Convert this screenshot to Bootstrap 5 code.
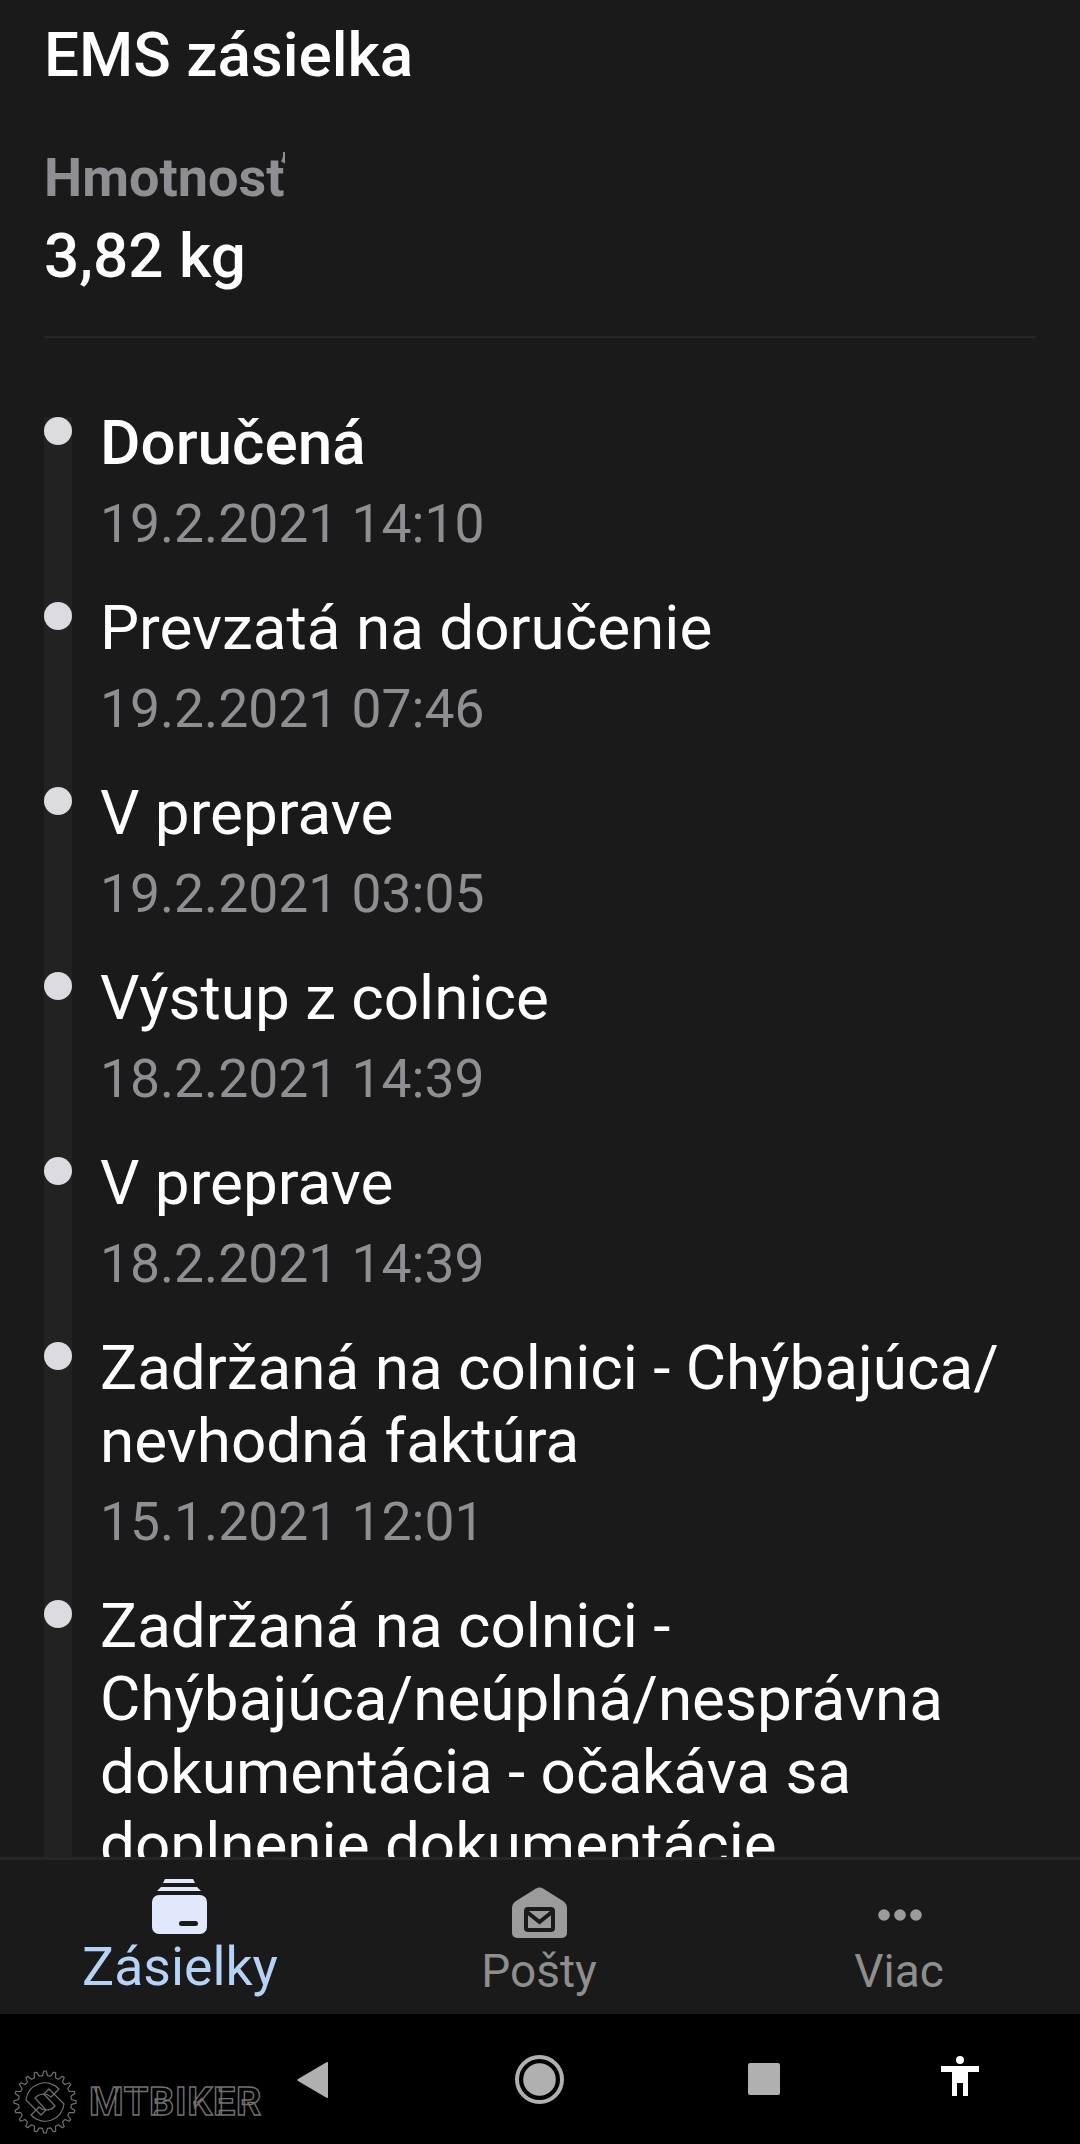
<!doctype html>
<html lang="en">
<head>
  <meta charset="UTF-8">
  <title>EMS zásielka</title>
  <link href="https://cdn.jsdelivr.net/npm/bootstrap@5.3.3/dist/css/bootstrap.min.css" rel="stylesheet">
  <script src="https://cdn.jsdelivr.net/npm/bootstrap@5.3.3/dist/js/bootstrap.bundle.min.js"></script>
  <style>
    html, body { height: 100%; }
    body { background: #1a1a1a; font-family: Roboto, "Liberation Sans", sans-serif; color: #fff; overflow: hidden; }
    .app-shell { width: 1080px; height: 2144px; }
    .status-edge { height: 4px; background: #1c1a16; }
    .scroll-area { min-height: 0; padding: 0 44px; }
    .ship-title { font-size: 62px; font-weight: 500; line-height: 66px; margin: 18px 0 0; }
    .weight-label { font-size: 54px; font-weight: 700; line-height: 60px; color: #8e8e93; margin-top: 60px; width: 241px; overflow: hidden; white-space: nowrap; }
    .weight-value { font-size: 62px; font-weight: 500; line-height: 66px; margin-top: 15px; }
    .sep-line { height: 2px; background: #262626; margin-top: 47px; }
    .track-list { margin-top: 68px; position: relative; }
    .track-rail { position: absolute; left: 0; top: 11px; bottom: 0; width: 28px; background: #222; }
    .track-row { position: relative; padding-left: 56px; padding-bottom: 37px; }
    .track-row:last-child { padding-bottom: 80px; }
    .track-dot { position: absolute; left: 0; top: 11px; width: 28px; height: 28px; border-radius: 50%; background: #dcdce0; }
    .track-name { font-size: 62px; line-height: 73px; }
    .track-name.done { font-weight: 500; }
    .track-when { font-size: 53.4px; line-height: 60px; color: #8e8e93; margin-top: 15px; }
    .tab-bar { height: 157px; flex: none; background: #1a1a1a; border-top: 3px solid #262626; }
    .tab-cell { width: 360px; height: 100%; position: relative; text-align: center; }
    .tab-icon { position: absolute; }
    .tab-text { position: absolute; left: 0; right: 2px; line-height: 54px; color: #8e8e8e; font-size: 46px; }
    .tab-text.active { right: 0; color: #b6d3f7; font-size: 53.6px; }
    .sys-bar { height: 130px; flex: none; background: #000; position: relative; }
    .sys-icon { position: absolute; }
    .wm-text { position: absolute; left: 89px; top: 68px; font-size: 39.5px; line-height: 40px; font-weight: 700; color: #000; -webkit-text-stroke: 1.4px #707070; letter-spacing: .75px; }
  </style>
</head>
<body>
<div class="app-shell d-flex flex-column">
  <div class="status-edge flex-shrink-0"></div>
  <div class="scroll-area flex-grow-1 overflow-hidden">
    <h1 class="ship-title">EMS zásielka</h1>
    <div class="weight-label">Hmotnosť</div>
    <div class="weight-value">3,82 kg</div>
    <div class="sep-line"></div>
    <div class="track-list">
      <div class="track-rail"></div>
      <div class="track-row"><span class="track-dot"></span><div class="track-name done">Doručená</div><div class="track-when">19.2.2021 14:10</div></div>
      <div class="track-row"><span class="track-dot"></span><div class="track-name">Prevzatá na doručenie</div><div class="track-when">19.2.2021 07:46</div></div>
      <div class="track-row"><span class="track-dot"></span><div class="track-name">V preprave</div><div class="track-when">19.2.2021 03:05</div></div>
      <div class="track-row"><span class="track-dot"></span><div class="track-name">Výstup z colnice</div><div class="track-when">18.2.2021 14:39</div></div>
      <div class="track-row"><span class="track-dot"></span><div class="track-name">V preprave</div><div class="track-when">18.2.2021 14:39</div></div>
      <div class="track-row"><span class="track-dot"></span><div class="track-name">Zadržaná na colnici - Chýbajúca/<br>nevhodná faktúra</div><div class="track-when">15.1.2021 12:01</div></div>
      <div class="track-row"><span class="track-dot"></span><div class="track-name">Zadržaná na colnici -<br>Chýbajúca/neúplná/nesprávna<br>dokumentácia - očakáva sa<br>doplnenie dokumentácie</div></div>
    </div>
  </div>
  <div class="tab-bar d-flex">
    <div class="tab-cell">
      <svg class="tab-icon" style="left:152px;top:19px" width="55" height="55" viewBox="0 0 55 55"><path d="M13 0h28l2 4H11z" fill="#e2e8fc"/><path d="M9 8h36l4 4H5z" fill="#e2e8fc"/><path fill-rule="evenodd" d="M7 16h41a7 7 0 0 1 7 7v25a7 7 0 0 1-7 7H7a7 7 0 0 1-7-7V23a7 7 0 0 1 7-7zM29.500 42h14a2.500 2.500 0 0 1 0 5h-14a2.500 2.500 0 0 1 0-5z" fill="#e2e8fc"/></svg>
      <div class="tab-text active" style="top:80px">Zásielky</div>
    </div>
    <div class="tab-cell">
      <svg class="tab-icon" style="left:152px;top:27px" width="55" height="51" viewBox="0 0 55 51"><path d="M24 1.500Q27.500-.5 31 1.500L51 14Q55 17 55 21V46a5 5 0 0 1-5 5H5a5 5 0 0 1-5-5V21Q0 17 4 14Z" fill="#9b9b9b"/><rect x="14" y="22" width="27" height="21" rx="2" fill="none" stroke="#1a1a1a" stroke-width="4"/><path d="M15 25l12.500 10L40 25" fill="none" stroke="#1a1a1a" stroke-width="4"/></svg>
      <div class="tab-text" style="top:84px">Pošty</div>
    </div>
    <div class="tab-cell">
      <svg class="tab-icon" style="left:158px;top:49px" width="44" height="12" viewBox="0 0 44 12"><circle cx="6" cy="6" r="5.800" fill="#9b9b9b"/><circle cx="22" cy="6" r="5.800" fill="#9b9b9b"/><circle cx="38" cy="6" r="5.800" fill="#9b9b9b"/></svg>
      <div class="tab-text" style="top:84px">Viac</div>
    </div>
  </div>
  <div class="sys-bar">
    <svg class="sys-icon" style="left:13px;top:56px" width="64" height="64" viewBox="0 0 64 64">
      <g fill="none" stroke="#707070" stroke-width="1.200" stroke-linejoin="round">
        <path id="gearPath"/>
        <path d="M13 30A19 19 0 0 1 46 19L38 27A11 11 0 0 0 22 28L33 40L28 45Z"/>
        <path d="M13 30A19 19 0 0 1 46 19L38 27A11 11 0 0 0 22 28L33 40L28 45Z" transform="rotate(180 32 32)"/>
      </g>
    </svg>
    <div class="wm-text">MTBIKER</div>
    <svg class="sys-icon" style="left:297px;top:48px" width="31" height="36" viewBox="0 0 31 36"><path d="M31 1v34a1 1 0 0 1-1.500.8L1 19a1.200 1.200 0 0 1 0-2L29.500.2A1 1 0 0 1 31 1z" fill="#b0b0b0"/></svg>
    <svg class="sys-icon" style="left:515px;top:41px" width="49" height="49" viewBox="0 0 49 49"><circle cx="24.500" cy="24.500" r="22.500" fill="none" stroke="#b0b0b0" stroke-width="4"/><circle cx="24.500" cy="24.500" r="16.300" fill="#b0b0b0"/></svg>
    <div class="sys-icon" style="left:748px;top:49px;width:32px;height:32px;background:#b0b0b0;border-radius:2px"></div>
    <svg class="sys-icon" style="left:941px;top:42px" width="38" height="40" viewBox="0 0 38 40"><circle cx="19" cy="4" r="4" fill="#fff"/><path d="M0 10h38v6H27v24h-5V27h-6v13h-5V16H0z" fill="#fff"/></svg>
  </div>
</div>
<script>
  // gear outline for the watermark
  var teeth = 20, d = '';
  for (var i = 0; i < teeth; i++) {
    var step = Math.PI * 2 / teeth, a = i * step;
    [[31, -0.12], [31, 0.12], [26.5, 0.3], [26.5, 0.7]].forEach(function (p, j) {
      var ang = a + p[1] * step;
      d += (i === 0 && j === 0 ? 'M' : 'L') + (32 + p[0] * Math.cos(ang)).toFixed(1) + ' ' + (32 + p[0] * Math.sin(ang)).toFixed(1);
    });
  }
  document.getElementById('gearPath').setAttribute('d', d + 'Z');
</script>
</body>
</html>
